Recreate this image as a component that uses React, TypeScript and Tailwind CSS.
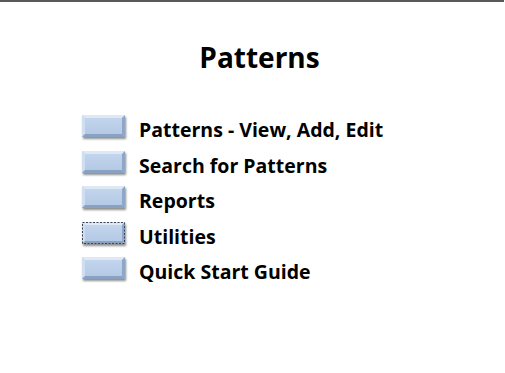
import type { ReactNode } from 'react';

const ITEMS = ['Patterns - View, Add, Edit', 'Search for Patterns', 'Reports', 'Utilities', 'Quick Start Guide'];

function BevelButton({ focused }: { focused?: boolean }): ReactNode {
  return (
    <svg width="48" height="28" viewBox="0 0 48 28" className="shrink-0">
      <defs>
        <linearGradient id="face" x1="0" y1="0" x2="0" y2="1">
          <stop offset="0" stopColor="#c6d7ee" />
          <stop offset="1" stopColor="#b1c7e4" />
        </linearGradient>
        <filter id="shadow" x="-20%" y="-20%" width="140%" height="160%">
          <feGaussianBlur in="SourceAlpha" stdDeviation="1.2" />
          <feOffset dx="0.5" dy="2" />
          <feComponentTransfer>
            <feFuncA type="linear" slope="0.45" />
          </feComponentTransfer>
          <feMerge>
            <feMergeNode />
            <feMergeNode in="SourceGraphic" />
          </feMerge>
        </filter>
      </defs>
      <g filter="url(#shadow)">
        <rect x="2" y="2" width="43" height="22" fill="url(#face)" />
        {/* bevel edges */}
        <polygon points="2,2 45,2 42,5 5,5" fill="#dfe9f6" />
        <polygon points="2,2 5,5 5,21 2,24" fill="#d0def1" />
        <polygon points="45,2 45,24 42,21 42,5" fill="#8ea7c7" />
        <polygon points="2,24 45,24 42,21 5,21" fill="#8aa2c2" />
      </g>
      {focused && (
        <rect x="2.5" y="2.5" width="42" height="21" fill="none" stroke="#3a4452" strokeWidth="1" strokeDasharray="2 1.5" />
      )}
    </svg>
  );
}

export default function App() {
  return (
    <div className="h-[373px] w-[505px] bg-white font-['Open_Sans',sans-serif] text-black">
      <div className="h-[2px] w-[504px] bg-[#595959]" />
      <h1 className="pt-[38px] pl-[14px] text-center text-[28px] font-bold leading-[34px]">Patterns</h1>
      <ul className="mt-[39px] flex flex-col gap-[7.5px] pl-[80px]">
        {ITEMS.map((label) => (
          <li key={label} className="flex h-[28px] items-center gap-[11px]">
            <BevelButton focused={label === 'Utilities'} />
            <span className="mt-[6px] text-[19.5px] font-bold leading-[26px]">{label}</span>
          </li>
        ))}
      </ul>
    </div>
  );
}
